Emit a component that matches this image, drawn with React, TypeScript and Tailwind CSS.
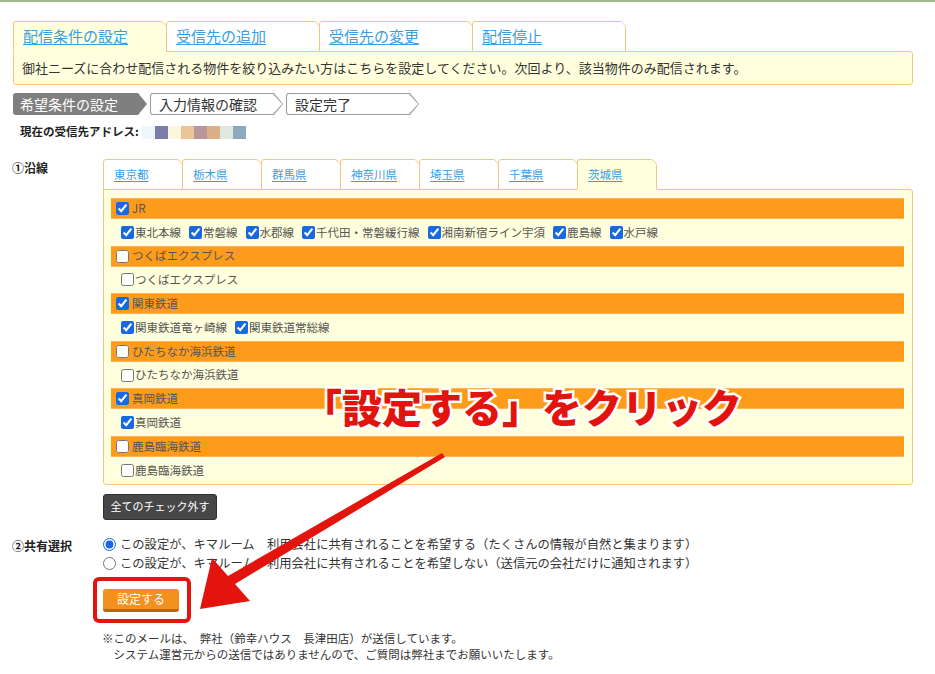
import React from 'react';

const tabs = ['配信条件の設定', '受信先の追加', '受信先の変更', '配信停止'];
const prefs = ['東京都', '栃木県', '群馬県', '神奈川県', '埼玉県', '千葉県', '茨城県'];

type Company = { name: string; checked: boolean; lines: string[] };

const companies: Company[] = [
  {
    name: 'JR',
    checked: true,
    lines: ['東北本線', '常磐線', '水郡線', '千代田・常磐緩行線', '湘南新宿ライン宇須', '鹿島線', '水戸線'],
  },
  { name: 'つくばエクスプレス', checked: false, lines: ['つくばエクスプレス'] },
  { name: '関東鉄道', checked: true, lines: ['関東鉄道竜ヶ崎線', '関東鉄道常総線'] },
  { name: 'ひたちなか海浜鉄道', checked: false, lines: ['ひたちなか海浜鉄道'] },
  { name: '真岡鉄道', checked: true, lines: ['真岡鉄道'] },
  { name: '鹿島臨海鉄道', checked: false, lines: ['鹿島臨海鉄道'] },
];

const addressBlocks = ['#eef8fc', '#7b7ca8', '#fbf6dc', '#ecc596', '#b8979c', '#dab087', '#dfe7df', '#8ba9bf'];

// folded top-right corner of a tab
const Corner = () => (
  <svg className="absolute -top-px -right-px" width="6" height="6" viewBox="0 0 6 6">
    <path d="M0 0H6V6Z" fill="#fff" />
    <path d="M0.5 0L6 5.5" stroke="#f8c47e" strokeWidth="1" />
  </svg>
);

const Check = ({ checked }: { checked: boolean }) => (
  <input type="checkbox" defaultChecked={checked} className="w-[13px] h-[13px] shrink-0 accent-[#1669e3]" />
);

export default function App() {
  return (
    <div className="relative w-[935px] h-[674px] overflow-hidden bg-white text-[#333] [font-family:'Noto_Sans_CJK_JP','Noto_Sans',sans-serif]">
      <div className="h-[2px] bg-[#a4b98b]" />

      <div className="pl-[13px] pr-[22px]">
        {/* main tabs */}
        <div className="relative z-10 flex mt-[19px] -mb-px">
          {tabs.map((t, i) => (
            <div
              key={t}
              className={`relative w-[154px] h-[31px] border border-[#f8c47e] rounded-tl-[3px] pl-[9px] pt-[3px] text-[15px] ${
                i > 0 ? '-ml-px' : ''
              } ${i === 0 ? 'bg-[#ffffdd] border-b-[#ffffdd]' : 'bg-white'}`}
            >
              <span className="text-[#3b9ee0] underline underline-offset-2">{t}</span>
              <Corner />
            </div>
          ))}
        </div>
        <div className="h-[34px] border border-[#f8c47e] bg-[#ffffdd] rounded-b-[3px] rounded-tr-[3px] pl-[8px] flex items-center text-[13px]">
          御社ニーズに合わせ配信される物件を絞り込みたい方はこちらを設定してください。次回より、該当物件のみ配信されます。
        </div>

        {/* steps */}
        <div className="flex gap-[3px] mt-[8px] h-[22px] text-[14px] leading-[22px]">
          <div className="w-[134px] bg-[#7f7f7f] text-white rounded-l-[3px] pl-[7px] [clip-path:polygon(0_0,calc(100%_-_9px)_0,100%_50%,calc(100%_-_9px)_100%,0_100%)]">
            希望条件の設定
          </div>
          {['入力情報の確認', '設定完了'].map((s) => (
            <div
              key={s}
              className="w-[133px] bg-[#9c9c9c] p-px rounded-l-[3px] [clip-path:polygon(0_0,calc(100%_-_9px)_0,100%_50%,calc(100%_-_9px)_100%,0_100%)]"
            >
              <div className="h-full bg-white rounded-l-[2px] pl-[8px] leading-[20px] [clip-path:polygon(0_0,calc(100%_-_9px)_0,100%_50%,calc(100%_-_9px)_100%,0_100%)]">
                {s}
              </div>
            </div>
          ))}
        </div>

        {/* address */}
        <div className="flex items-center mt-[9px] pl-[7px] h-[16px]">
          <span className="text-[11.5px] font-bold text-[#222]">現在の受信先アドレス:</span>
          <div className="flex ml-[3px] mt-[1px]">
            {addressBlocks.map((c, i) => (
              <div key={i} className="w-[13px] h-[13px]" style={{ backgroundColor: c }} />
            ))}
          </div>
        </div>

        {/* lines */}
        <div className="flex mt-[19px]">
          <div className="w-[91px] shrink-0 text-[12px] font-bold text-[#222] -ml-px">①沿線</div>
          <div className="flex-1">
            <div className="relative z-10 flex -mb-px">
              {prefs.map((p, i) => (
                <div
                  key={p}
                  className={`relative w-[80px] h-[31px] border border-[#f8c47e] rounded-tl-[3px] pl-[10px] flex items-center text-[11.5px] ${
                    i > 0 ? '-ml-px' : ''
                  } ${i === prefs.length - 1 ? 'bg-[#ffffdd] border-b-[#ffffdd]' : 'bg-white'}`}
                >
                  <span className="text-[#3b9ee0] underline underline-offset-2">{p}</span>
                  <Corner />
                </div>
              ))}
            </div>
            <div className="border border-[#f8c47e] bg-[#ffffdd] rounded-b-[3px] rounded-tr-[3px] pl-[7px] pr-[8px] pt-[8px] text-[11.5px] text-[#555]">
              {companies.map((c) => (
                <div key={c.name}>
                  <div className="h-[21px] bg-[#fd9c1a] border-y border-[#fdb457] flex items-center pl-[5px] gap-[3px]">
                    <Check checked={c.checked} />
                    <span>{c.name}</span>
                  </div>
                  <div className="h-[26.6px] flex items-center pl-[10px] gap-[8px]">
                    {c.lines.map((l) => (
                      <label key={l} className="flex items-center gap-[1px]">
                        <Check checked={c.checked} />
                        <span>{l}</span>
                      </label>
                    ))}
                  </div>
                </div>
              ))}
            </div>
            <button className="mt-[9px] w-[114px] h-[26px] bg-[#474747] border border-[#2f2f2f] rounded-[3px] text-white text-[11px]">
              全てのチェック外す
            </button>
          </div>
        </div>

        {/* share */}
        <div className="flex mt-[15px]">
          <div className="w-[91px] shrink-0 text-[12px] font-bold text-[#222] -ml-px pt-[2px]">②共有選択</div>
          <div className="flex-1 text-[12.3px]">
            <label className="h-[19px] flex items-center gap-[4px]">
              <input type="radio" name="share" defaultChecked className="w-[13px] h-[13px] accent-[#1669e3]" />
              <span>この設定が、キマルーム　利用会社に共有されることを希望する（たくさんの情報が自然と集まります）</span>
            </label>
            <label className="h-[19px] flex items-center gap-[4px]">
              <input type="radio" name="share" className="w-[13px] h-[13px]" />
              <span>この設定が、キマルーム　利用会社に共有されることを希望しない（送信元の会社だけに通知されます）</span>
            </label>

            <div className="relative w-[76px] mt-[16px]">
              <button className="w-[76px] h-[23px] bg-[#f3911f] border-b-[3px] border-[#b76613] rounded-[3px] text-white text-[12px] leading-[20px]">
                設定する
              </button>
              <div className="absolute -left-[10px] -top-[12px] w-[98px] h-[46px] border-[4px] border-[#e2140d] rounded-[6px]" />
            </div>

            <div className="mt-[18px] -ml-px text-[11.5px] leading-[16px]">
              <p>※このメールは、　弊社（鈴幸ハウス　長津田店）が送信しています。</p>
              <p>　システム運営元からの送信ではありませんので、ご質問は弊社までお願いいたします。</p>
            </div>
          </div>
        </div>
      </div>

      {/* callout */}
      <svg className="absolute left-0 top-0 pointer-events-none" width="935" height="674" viewBox="0 0 935 674">
        <path d="M442 453 L445 457 L235 584 L250 601 L200 609 L212 558 L228 576 Z" fill="#e2140d" />
      </svg>
      <div className="absolute left-[302px] top-[384px] text-[40px] leading-[44px] font-black text-[#e2140d] whitespace-nowrap [-webkit-text-stroke:5px_white] [paint-order:stroke_fill]">
        「設定する」をクリック
      </div>
    </div>
  );
}
